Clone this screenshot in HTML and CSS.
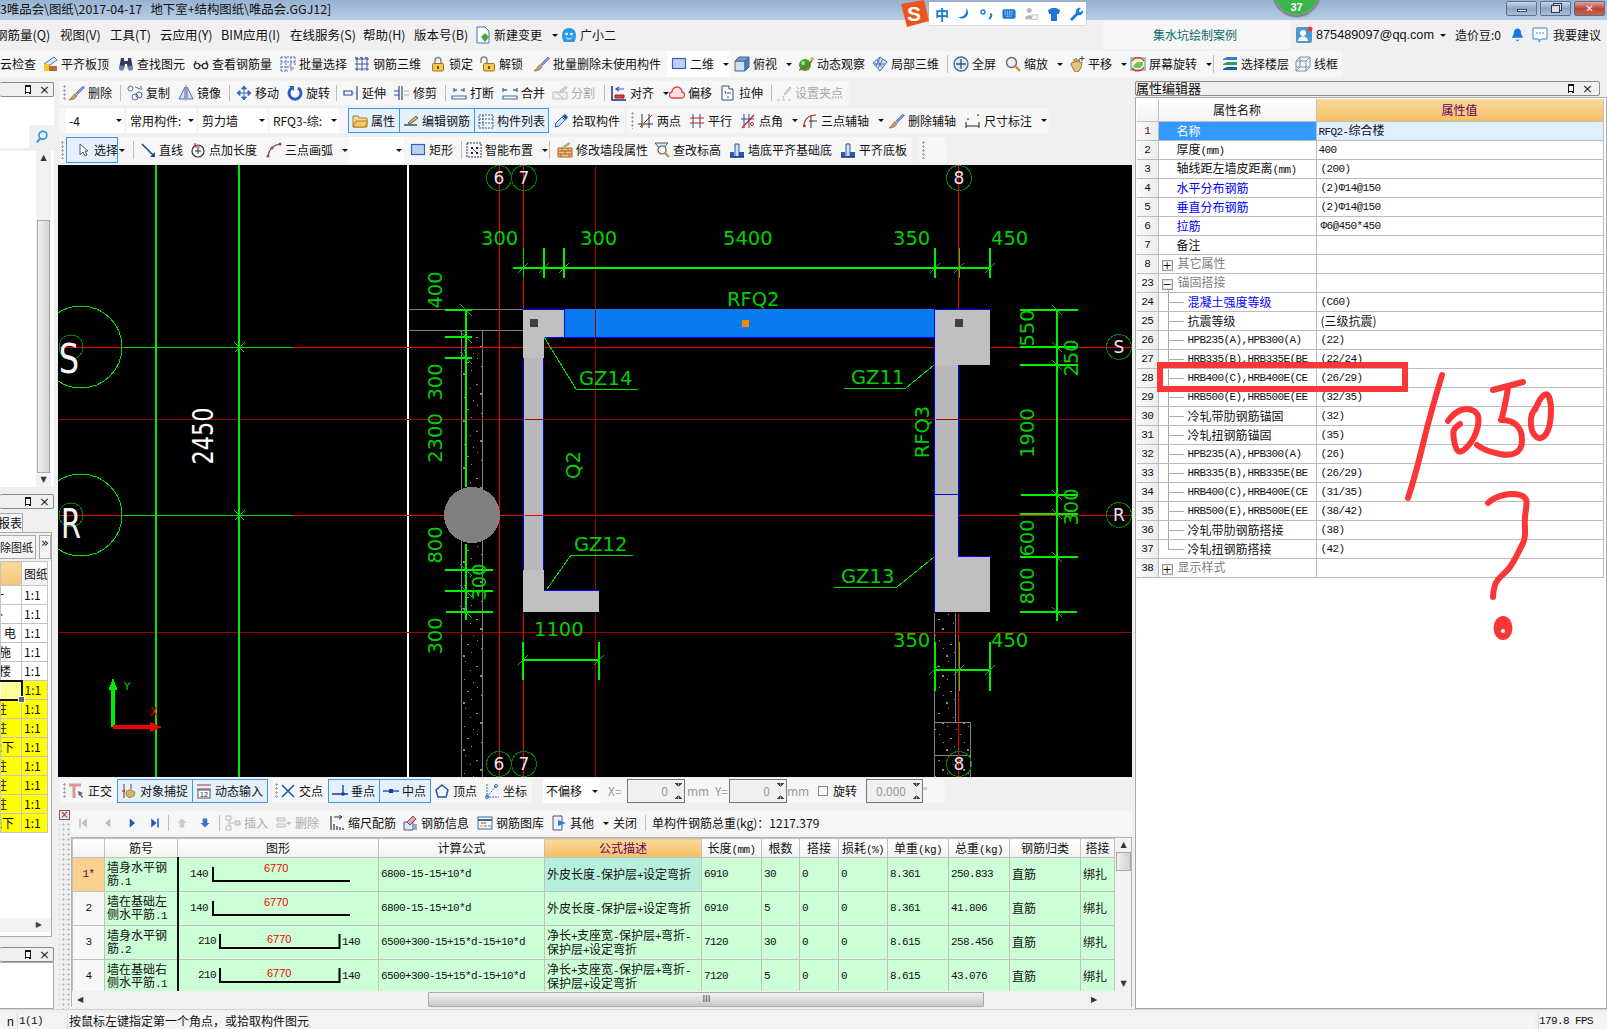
FILE: index.html
```html
<!DOCTYPE html>
<html lang="zh-CN">
<head>
<meta charset="utf-8">
<title>广联达钢筋算量</title>
<link rel="stylesheet" href="styles.css">
</head>
<body>
<svg class="defs" aria-hidden="true">
<defs>
<pattern id="sp" width="21" height="47" patternUnits="userSpaceOnUse">
<path class="spk" d="M3 3h1v1H3zM14 8h2v1h-2zM8 12h1v1H8zM18 17h2v2h-2zM2 21h1v1H2zM11 24h1v1h-1zM15 29h1v1h-1zM5 33h2v1H5zM19 37h1v1h-1zM9 41h1v1H9zM1 44h2v2H1z"/>
</pattern>
<symbol id="i-flush" viewBox="0 0 16 16"><path d="M2 8 12 1l3 3L5 11z" fill="#dfe7f2" stroke="#4878a8"/><rect x="2" y="10" width="13" height="5" fill="#b86a30"/><rect x="2" y="8" width="5" height="7" fill="#f8c830"/></symbol>
<symbol id="i-binoc" viewBox="0 0 16 16"><path d="M3 2h3v3h4V2h3l2 11h-5L9 8H7l-1 5H1z" fill="#2c3e5c"/><circle cx="3.500" cy="12" r="2.600" fill="#6a84a8"/><circle cx="12.500" cy="12" r="2.600" fill="#6a84a8"/></symbol>
<symbol id="i-glass" viewBox="0 0 16 16"><g fill="none" stroke="#333" stroke-width="1.300"><circle cx="4" cy="10" r="2.700"/><circle cx="12" cy="10" r="2.700"/><path d="M6.700 9.500h2.600M1 9l2-4M15 9l-2-4"/></g></symbol>
<symbol id="i-batch" viewBox="0 0 16 16"><path d="M1 1h14M1 6h14M1 11h9M1 15h7M1 1v14M6 1v14M11 1v10M15 1v8" fill="none" stroke="#4a6ea8" stroke-dasharray="2 1"/><path d="m9 8 6 5-3 .5L11 16z" fill="#aab"/></symbol>
<symbol id="i-r3d" viewBox="0 0 16 16"><path d="M1 3h14M1 8h14M1 13h14M3 1v14M8 1v14M13 1v14M1 1l3 2M6 1l3 2M11 1l3 2" fill="none" stroke="#3a5a98"/></symbol>
<symbol id="i-lock" viewBox="0 0 16 16"><path d="M5 8V4.500a3 3 0 0 1 6 0V8" fill="none" stroke="#888" stroke-width="1.500"/><rect x="2.500" y="7.500" width="11" height="7.500" rx="1" fill="#f2c94c" stroke="#a07818"/><rect x="7" y="10" width="2" height="3" fill="#654"/></symbol>
<symbol id="i-unlock" viewBox="0 0 16 16"><path d="M1 7V4a3 3 0 0 1 6 0v4" fill="none" stroke="#888" stroke-width="1.500"/><rect x="3.500" y="7.500" width="11" height="7.500" rx="1" fill="#f2c94c" stroke="#a07818"/><rect x="8" y="10" width="2" height="3" fill="#654"/></symbol>
<symbol id="i-brush" viewBox="0 0 16 16"><path d="m7 8 7-7 1.500 1.500-7 7z" fill="#7a9fd6" stroke="#3c5c98" stroke-width=".6"/><path d="M6 8.500 8 10.500C7 14 3 15 0 15c2-1 3-4 6-6.500z" fill="#c89868" stroke="#805830" stroke-width=".6"/></symbol>
<symbol id="i-rect" viewBox="0 0 16 16"><rect x="1.500" y="2.500" width="13" height="10" fill="#bcd0f2" stroke="#3464b8" stroke-width="1.200"/></symbol>
<symbol id="i-cube" viewBox="0 0 16 16"><path d="M1 5h10v10H1z" fill="#cfe0f2" stroke="#3a6a98"/><path d="M1 5l4-4h10l-4 4z" fill="#7a9ec6" stroke="#3a6a98"/><path d="M11 5l4-4v10l-4 4z" fill="#4f7ca8" stroke="#3a6a98"/></symbol>
<symbol id="i-orbit" viewBox="0 0 16 16"><circle cx="7" cy="9" r="6" fill="#3da030"/><circle cx="5" cy="7" r="2" fill="#a8e080"/><path d="M1 14C6 13 13 8 15 2" fill="none" stroke="#806830" stroke-width="1.500"/><circle cx="14" cy="3" r="1.800" fill="#a8c848"/></symbol>
<symbol id="i-local" viewBox="0 0 16 16"><path d="M1 7 8 1l7 5-7 9z" fill="#cfe0f6" stroke="#4a74b0"/><path d="m5 4 5 7M8 2l-4 8M11 3 6 12M2 8h11" stroke="#4a74b0" fill="none"/></symbol>
<symbol id="i-zfull" viewBox="0 0 16 16"><circle cx="8" cy="8" r="7" fill="#dfe9f6" stroke="#54688a" stroke-width="1.400"/><path d="M8 3v10M3 8h10" stroke="#2850a0" stroke-width="1.300"/></symbol>
<symbol id="i-zoom" viewBox="0 0 16 16"><circle cx="6.500" cy="6.500" r="5" fill="#e8f0fa" stroke="#667" stroke-width="1.400"/><path d="m10 10 5 5" stroke="#c89828" stroke-width="2.400"/></symbol>
<symbol id="i-hand" viewBox="0 0 16 16"><path d="M2 9c0-2 1-3 2-3l1 1V3l2 3V2l2 4 1-3 1 4 2-1-1 6-3 4H6z" fill="#e8c078" stroke="#8a6830" stroke-width=".8"/><path d="M13 0v5M10.500 2.500h5" stroke="#444"/></symbol>
<symbol id="i-rot" viewBox="0 0 16 16"><rect x="1" y="2" width="14" height="12" fill="#f8f0c8" stroke="#58a8c8" stroke-width="1.200"/><path d="M3 10 7 6h6v3l-3 3H5z" fill="#78c058"/><path d="M2 5a7 7 0 0 1 12 0M14 11a7 7 0 0 1-12 1" fill="none" stroke="#e03030" stroke-width="1.300"/></symbol>
<symbol id="i-floors" viewBox="0 0 16 16"><path d="M1 3 5 1h10v3H1z" fill="#3a7ac0"/><path d="M1 8l4-2h10v3H1z" fill="#2aa060"/><path d="M1 13l4-2h10v3H1z" fill="#1a5aa0"/></symbol>
<symbol id="i-wire" viewBox="0 0 16 16"><path d="M1 5h10v10H1zM1 5l4-4h10v10l-4 4M11 5l4-4M5 1v10H1M5 11l-4 4M5 11h10" fill="none" stroke="#7a90a8"/></symbol>
<symbol id="i-copy" viewBox="0 0 16 16"><circle cx="3.500" cy="3.500" r="2.500" fill="none" stroke="#667"/><circle cx="8" cy="12" r="3" fill="none" stroke="#4a6ea8"/><circle cx="12" cy="10" r="3" fill="none" stroke="#4a6ea8"/><path d="m8 2 5 2M14 1v4" stroke="#667" fill="none"/></symbol>
<symbol id="i-mirror" viewBox="0 0 16 16"><path d="M7 2v12H1z" fill="#d8e4f4" stroke="#4a6ea8"/><path d="M9 2v12h6z" fill="#d8e4f4" stroke="#4a6ea8"/><path d="M8 0v16" stroke="#889"/></symbol>
<symbol id="i-move" viewBox="0 0 16 16"><path d="M8 1v14M1 8h14M8 1 5.500 4h5zM8 15l-2.500-3h5zM1 8l3-2.500v5zM15 8l-3-2.500v5z" fill="#3a6ab0" stroke="#3a6ab0"/></symbol>
<symbol id="i-rotc" viewBox="0 0 16 16"><path d="M5 3a6 6 0 1 0 6 0" fill="none" stroke="#2860c8" stroke-width="3"/><path d="M2 1h5v5z" fill="#2860c8"/></symbol>
<symbol id="i-extend" viewBox="0 0 16 16"><path d="M1 6h8v4H1z" fill="none" stroke="#2a4a98" stroke-width="1.200"/><path d="M14 1v14" stroke="#2a4a98" stroke-width="1.200"/><path d="M10 8h3" stroke="#999" stroke-dasharray="1 1"/></symbol>
<symbol id="i-trim" viewBox="0 0 16 16"><path d="M5 1v14M8 1v14" stroke="#2a4a98" stroke-width="1.200"/><path d="M0 6h5M0 10h5" stroke="#2a4a98"/><path d="M10 6h5M10 10h5" stroke="#aaa"/></symbol>
<symbol id="i-break" viewBox="0 0 16 16"><path d="M1 11h14v3H1z" fill="none" stroke="#3a6ea8" stroke-width="1.200"/><path d="M3 5h3M3 3v4M10 5h3M13 3v4" fill="none" stroke="#3a6ea8" stroke-width="1.300"/></symbol>
<symbol id="i-merge" viewBox="0 0 16 16"><path d="M1 11h14v3H1z" fill="none" stroke="#3a6ea8" stroke-width="1.200"/><path d="M1 5h4M1 3v4M11 5h4M15 3v4" fill="none" stroke="#3a6ea8" stroke-width="1.300"/></symbol>
<symbol id="i-split" viewBox="0 0 16 16"><path d="M1 7h14v7H1zM4 7l8 7" fill="#eee" stroke="#bbb"/><path d="m8 6 6-5 1 2-6 5z" fill="#ddd" stroke="#bbb"/></symbol>
<symbol id="i-align" viewBox="0 0 16 16"><path d="M1 1v14h14" fill="none" stroke="#1a2a80" stroke-width="1.500"/><path d="M4 10h9v3H4z" fill="#e04040" stroke="#a01818"/><path d="M13 4H6m2-2-3 2 3 2" fill="none" stroke="#2a58b8" stroke-width="1.200"/></symbol>
<symbol id="i-offset" viewBox="0 0 16 16"><path d="M4 13a3 3 0 0 1-1-6 5 5 0 0 1 10 0 3 3 0 0 1-1 6z" fill="#fde0e0" stroke="#d04848" stroke-width="1.300"/></symbol>
<symbol id="i-stretch" viewBox="0 0 16 16"><path d="M2 1h7v3h4v11H2z" fill="#fff" stroke="#2a4a80"/><path d="M8 7v2M8 11v2M10 7v2M5 6l1 3" stroke="#2a4a80"/></symbol>
<symbol id="i-grip" viewBox="0 0 16 16"><path d="m8 9 6-7 1 1-6 7z" fill="#ddd" stroke="#bbb"/><path d="M1 15h3M6 15h3M12 15h3M7 11l1 3" stroke="#bbb"/></symbol>
<symbol id="i-prop" viewBox="0 0 16 16"><path d="M1 3h5l1 2h8v9H1z" fill="#f6d890" stroke="#a88028"/><path d="m1 14 3-6h12l-3 6z" fill="#f8c860" stroke="#a88028"/></symbol>
<symbol id="i-edit" viewBox="0 0 16 16"><path d="M1 12h13" stroke="#222" stroke-width="1.200"/><path d="m5 10 8-7 2 2-8 6z" fill="#d8b870" stroke="#706030"/></symbol>
<symbol id="i-list" viewBox="0 0 16 16"><path d="M1 2h14v13H1zM1 6h14M1 10h14M5 2v13" fill="#f4f6fa" stroke="#3a5a88" stroke-dasharray="2 1"/></symbol>
<symbol id="i-pick" viewBox="0 0 16 16"><path d="m2 14 1-4 6-6 3 3-6 6z" fill="#cfe0f8" stroke="#2a58a8"/><path d="m9 3 3-2 3 3-2 3z" fill="#2a58a8"/></symbol>
<symbol id="i-2pt" viewBox="0 0 16 16"><path d="M4 1v14M11 1v14M0 11h15" stroke="#334" /><path d="M2 14 14 2" stroke="#c02020"/><circle cx="5" cy="11" r="1.500" fill="#60a030"/></symbol>
<symbol id="i-par" viewBox="0 0 16 16"><path d="M4 1v14M11 1v14" stroke="#2a4a98"/><path d="M1 5h14M1 10h14" stroke="#c02020"/></symbol>
<symbol id="i-ang" viewBox="0 0 16 16"><path d="M4 1v14M9 1v14M1 6h13" stroke="#2a4a98"/><path d="m2 15 12-13" stroke="#d02020" stroke-width="1.200"/><circle cx="12" cy="11" r="1.500" fill="none" stroke="#c02020"/></symbol>
<symbol id="i-arc3" viewBox="0 0 16 16"><path d="M2 13C2 6 7 2 14 2" fill="none" stroke="#c02020" stroke-width="1.200"/><circle cx="2.500" cy="13" r="1.300" fill="#c02020"/><path d="M7 8h8M9 3v12" stroke="#334"/></symbol>
<symbol id="i-dim" viewBox="0 0 16 16"><path d="M1 9v6M14 9v6M1 13h13" stroke="#222"/><rect x="2" y="5" width="2" height="2" fill="#40c060"/><rect x="12" y="1" width="2" height="2" fill="#40c060"/></symbol>
<symbol id="i-cur" viewBox="0 0 16 16"><path d="M5 2v11l3-3 2 4 2-1-2-4h3z" fill="#fff" stroke="#556" stroke-width="1"/></symbol>
<symbol id="i-line" viewBox="0 0 16 16"><path d="m2 2 11 11" stroke="#1a4a88" stroke-width="1.600"/><path d="M15 15h-5l5-5z" fill="#1a4a88"/></symbol>
<symbol id="i-plen" viewBox="0 0 16 16"><circle cx="8" cy="9" r="6" fill="none" stroke="#334" stroke-width="1.200"/><path d="M5 9h6M8 6v6" stroke="#334"/><path d="M5 1v4h5" fill="none" stroke="#d02020"/></symbol>
<symbol id="i-arc" viewBox="0 0 16 16"><path d="M2 14C3 7 7 3 14 2" fill="none" stroke="#44a" stroke-width="1.200"/><circle cx="2" cy="14" r="1.500" fill="#d03030"/><circle cx="6" cy="6" r="1.500" fill="#d03030"/><circle cx="14" cy="2" r="1.500" fill="#d03030"/></symbol>
<symbol id="i-smart" viewBox="0 0 16 16"><path d="M1 1h14v14H1z" fill="none" stroke="#334" stroke-dasharray="2 1"/><path d="M5 5h2v2H5zM10 5h2v2h-2zM5 10h2v2H5zM10 10h2v2h-2z" fill="#223"/><path d="M7 7l3 3" stroke="#2a58b8"/></symbol>
<symbol id="i-brick" viewBox="0 0 16 16"><path d="M1 6h14v9H1z" fill="#f4c080" stroke="#b06030"/><path d="M1 9h14M1 12h14M5 6v3M11 6v3M8 9v3M4 12v3M12 12v3" stroke="#b06030"/><path d="m5 5 7-5 2 2-7 4z" fill="#a8b860"/></symbol>
<symbol id="i-elev" viewBox="0 0 16 16"><path d="M1 1h13L9 7H6z" fill="#dce6f0" stroke="#556"/><circle cx="8" cy="8" r="4" fill="#fff" stroke="#556" stroke-width="1.200"/><path d="m11 11 4 4" stroke="#c09028" stroke-width="2.200"/></symbol>
<symbol id="i-wall" viewBox="0 0 16 16"><path d="M1 10h4v5H1zM10 10h5v5h-5z" fill="#2a5ab0"/><path d="M6 2h4v13H6z" fill="#cfe0f6" stroke="#2a5ab0"/><path d="M1 15h14" stroke="#123a88" stroke-width="1.500"/></symbol>
<symbol id="i-ortho" viewBox="0 0 16 16"><path d="M0 2h12M5 2v13" stroke="#d89898" stroke-width="3"/><path d="m9 8 1 5 1-1 2 3 1-1-2-3 2-1z" fill="#556"/></symbol>
<symbol id="i-snap" viewBox="0 0 16 16"><path d="M3 1v14M10 1v5" stroke="#7a2a2a"/><path d="M1 8h3M8 8h3" stroke="#7a2a2a"/><path d="M5 9c1-2 5-3 7-1l2 1-1 4-5 2-3-3z" fill="#d8b468" stroke="#8a6830" stroke-width=".7"/></symbol>
<symbol id="i-dyn" viewBox="0 0 16 16"><path d="M1 2h14M1 6h14" stroke="#a03838" stroke-width="1.200"/><rect x="2" y="7" width="12" height="8" fill="#fff" stroke="#556"/><text class="dyn12" x="4" y="14">12</text></symbol>
<symbol id="i-x" viewBox="0 0 16 16"><path d="m2 2 12 12M14 2 2 14" stroke="#1a58b0" stroke-width="1.600"/></symbol>
<symbol id="i-perp" viewBox="0 0 16 16"><path d="M0 11h16M11 2v9" stroke="#1a3a98" stroke-width="1.300"/><rect x="9.500" y="9.500" width="3" height="3" fill="#1a3a98"/></symbol>
<symbol id="i-midp" viewBox="0 0 16 16"><path d="M0 8h16" stroke="#1a3a98" stroke-width="1.300"/><rect x="6" y="6" width="4" height="4" fill="#1a3a98"/></symbol>
<symbol id="i-vert" viewBox="0 0 16 16"><path d="m8 2 6 5-2 7H4L2 7z" fill="none" stroke="#1a58b0" stroke-width="1.500"/></symbol>
<symbol id="i-coord" viewBox="0 0 16 16"><path d="M3 1v13h12M3 14 12 3" fill="none" stroke="#2a6ac8" stroke-dasharray="2 1"/><circle cx="12" cy="3" r="1.500" fill="none" stroke="#2a6ac8"/><circle cx="3" cy="14" r="1.500" fill="none" stroke="#2a6ac8"/></symbol>
<symbol id="i-first" viewBox="0 0 16 16"><path d="M3 2h2v12H3zM13 2v12L6 8z" fill="#bbb"/></symbol>
<symbol id="i-prev" viewBox="0 0 16 16"><path d="M11 2v12L4 8z" fill="#bbb"/></symbol>
<symbol id="i-next" viewBox="0 0 16 16"><path d="M5 2v12l7-6z" fill="#1a58c0"/></symbol>
<symbol id="i-last" viewBox="0 0 16 16"><path d="M3 2v12l7-6zM11 2h2v12h-2z" fill="#1a58c0"/></symbol>
<symbol id="i-up" viewBox="0 0 16 16"><path d="M8 2l6 6h-3v6H5V8H2z" fill="#ccc"/></symbol>
<symbol id="i-down" viewBox="0 0 16 16"><path d="M8 14 2 8h3V2h6v6h3z" fill="#3a70d0"/></symbol>
<symbol id="i-ins" viewBox="0 0 16 16"><path d="M1 1h5v4H1zM1 11h5v4H1zM4 5v6M4 8h5" fill="none" stroke="#bbb"/><path d="M10 6h5v4h-5z" fill="#ddd" stroke="#bbb"/></symbol>
<symbol id="i-del" viewBox="0 0 16 16"><path d="M1 3h8v3H1zM1 9h8v3H1z" fill="#eee" stroke="#bbb"/><path d="M10 8h4" stroke="#bbb"/><path d="m12 6 3 2-3 2z" fill="#bbb"/></symbol>
<symbol id="i-scale" viewBox="0 0 16 16"><path d="M2 1v14M5 9v6M8 11v4M11 12v3M14 13v2" stroke="#334" stroke-width="1.200"/><path d="M5 2h7m-2-2 3 2-3 2" fill="none" stroke="#334"/></symbol>
<symbol id="i-info" viewBox="0 0 16 16"><path d="M2 7h9v8H2z" fill="#dce8f8" stroke="#557"/><path d="m5 7 6-6 3 3-6 6z" fill="#d8a8a8" stroke="#846"/><rect x="11" y="9" width="4" height="6" fill="#8ab"/></symbol>
<symbol id="i-lib" viewBox="0 0 16 16"><rect x="1" y="2" width="14" height="12" fill="#f4f8fc" stroke="#3a6a98"/><path d="M1 5h14" stroke="#3a6a98" stroke-width="2"/><path d="M4 8h5" stroke="#556"/><path d="M3 11h3" stroke="#d8a020"/><path d="M7 11h3" stroke="#e04040"/><path d="M11 11h3" stroke="#30a060"/></symbol>
<symbol id="i-oth" viewBox="0 0 16 16"><path d="M2 1h9v14H2z" fill="#e8f0f8" stroke="#557"/><path d="M7 5v6l8-3z" fill="#3a78d8" /></symbol>
</defs>
</svg>

<div class="app">
  <header class="titlebar">
    <span class="ttext">3唯品会\图纸\2017-04-17   地下室+结构图纸\唯品会.GGJ12]</span>
    <div class="badge37"><span>37</span></div>
    <div class="winbtns">
      <span class="wb"><i class="wmin"></i></span>
      <span class="wb"><i class="wres"></i></span>
      <span class="wb wclose">✕</span>
    </div>
  </header>

  <nav class="menubar">
    <div class="menus">
      <span class="mfirst">钢筋量(Q)</span><span>视图(V)</span><span>工具(T)</span><span>云应用(Y)</span><span>BIM应用(I)</span><span>在线服务(S)</span><span>帮助(H)</span><span>版本号(B)</span>
      <span class="mi"><svg class="ic" viewBox="0 0 16 16"><path d="M2 0h8l4 4v12H2z" fill="#fff" stroke="#3478c8"/><path d="M10 6l4 4-4 5-4-5z" fill="#4aa838"/></svg>新建变更<i class="ar"></i></span>
      <span class="mi"><svg class="ic mascot" viewBox="0 0 16 16"><path d="M8 1a7 6.500 0 0 1 7 7c0 3-1 6-2 7H3C2 14 1 11 1 8a7 6.500 0 0 1 7-7z" fill="#2a9ae8"/><circle cx="5.500" cy="7" r="1.300" fill="#fff"/><circle cx="10.500" cy="7" r="1.300" fill="#fff"/><path d="M5 10.500c2 2 4 2 6 0" fill="none" stroke="#fff"/></svg>广小二</span>
    </div>
    <div class="casebox">集水坑绘制案例</div>
    <div class="userbox">
      <svg class="ic user" viewBox="0 0 16 16"><rect width="16" height="16" rx="2" fill="#4a9ad0"/><circle cx="7" cy="6" r="3" fill="#fff"/><path d="M2 14c0-6 10-6 10 0z" fill="#fff"/><circle cx="14" cy="2" r="2.500" fill="#f03838"/></svg>
      <span class="mail">875489097@qq.com</span><i class="ar"></i>
      <span class="beans">造价豆:0</span>
      <svg class="bell" viewBox="0 0 14 16"><path d="M7 1c3 0 4 3 4 6l2 4H1l2-4c0-3 1-6 4-6z" fill="#1a78e0"/><path d="M5 13h4l-2 2z" fill="#1a78e0"/></svg>
      <svg class="chat" viewBox="0 0 16 16"><path d="M1 1h14v11H9l-2 3v-3H1z" fill="#fff" stroke="#2a8ae0"/><path d="M4 6h2M7 6h2M10 6h2" stroke="#2a8ae0"/></svg>
      <span>我要建议</span>
    </div>
  </nav>

  <div class="seg tb1">
    <span class="ti">云检查</span>
    <span class="ti"><svg class="ic"><use href="#i-flush"/></svg>平齐板顶</span>
    <span class="ti"><svg class="ic"><use href="#i-binoc"/></svg>查找图元</span>
    <span class="ti"><svg class="ic"><use href="#i-glass"/></svg>查看钢筋量</span>
    <span class="ti"><svg class="ic"><use href="#i-batch"/></svg>批量选择</span>
    <span class="ti"><svg class="ic"><use href="#i-r3d"/></svg>钢筋三维</span>
    <span class="ti"><svg class="ic"><use href="#i-lock"/></svg>锁定</span>
    <span class="ti"><svg class="ic"><use href="#i-unlock"/></svg>解锁</span>
    <span class="ti"><svg class="ic"><use href="#i-brush"/></svg>批量删除未使用构件</span>
    <span class="ti lit"><svg class="ic"><use href="#i-rect"/></svg>二维<i class="ar"></i></span>
    <span class="ti"><svg class="ic"><use href="#i-cube"/></svg>俯视<i class="ar"></i></span>
    <span class="ti"><svg class="ic"><use href="#i-orbit"/></svg>动态观察</span>
    <span class="ti"><svg class="ic"><use href="#i-local"/></svg>局部三维</span>
    <i class="sep"></i>
    <span class="ti"><svg class="ic"><use href="#i-zfull"/></svg>全屏</span>
    <span class="ti"><svg class="ic"><use href="#i-zoom"/></svg>缩放<i class="ar"></i></span>
    <span class="ti"><svg class="ic"><use href="#i-hand"/></svg>平移<i class="ar"></i></span>
    <span class="ti"><svg class="ic"><use href="#i-rot"/></svg>屏幕旋转<i class="ar"></i></span>
    <i class="sep"></i>
    <span class="ti"><svg class="ic"><use href="#i-floors"/></svg>选择楼层</span>
    <span class="ti"><svg class="ic"><use href="#i-wire"/></svg>线框</span>
  </div>

  <div class="work">
    <aside class="leftcol">
      <div class="ptitle lt1"><i class="pin"></i><b class="px">×</b></div>
      <div class="whitefill"></div>
      <div class="searchrow"><span class="sinput"></span><svg class="sicon" viewBox="0 0 16 16"><circle cx="9" cy="6" r="4.500" fill="none" stroke="#3a9ae0" stroke-width="2"/><path d="M6 10l-4 4" stroke="#3a9ae0" stroke-width="2.500"/></svg></div>
      <div class="listbox">
        <div class="vscroll"><span class="sa">▲</span><span class="thumb"></span><span class="sa">▼</span></div>
      </div>
      <div class="ptitle lt2"><i class="pin"></i><b class="px">×</b></div>
      <div class="tabrow"><span class="ltab">报表</span></div>
      <div class="lbox">
        <div class="lbtns"><span class="lbtn">除图纸</span><span class="lmore">»</span></div>
        <table class="ltable">
          <tr class="lh"><th class="lho"></th><th>图纸</th></tr>
          <tr><td class="p17">一</td><td>1:1</td></tr>
          <tr><td class="p15">丶</td><td>1:1</td></tr>
          <tr><td class="p5">电</td><td>1:1</td></tr>
          <tr><td class="p10">施</td><td>1:1</td></tr>
          <tr><td class="p10">楼</td><td>1:1</td></tr>
          <tr class="y"><td class="cur"></td><td>1:1</td></tr>
          <tr class="y"><td>柱</td><td>1:1</td></tr>
          <tr class="y"><td>柱</td><td>1:1</td></tr>
          <tr class="y"><td class="p7">地下</td><td>1:1</td></tr>
          <tr class="y"><td>柱</td><td>1:1</td></tr>
          <tr class="y"><td>柱</td><td>1:1</td></tr>
          <tr class="y"><td>柱</td><td>1:1</td></tr>
          <tr class="y"><td class="p7">地下</td><td>1:1</td></tr>
        </table>
        <div class="lscroll"><span>▶</span></div>
      </div>
      <div class="ptitle lt3"><i class="pin"></i><b class="px">×</b></div>
      <div class="lastbox"></div>
    </aside>

    <main class="center">
      <div class="row r2">
        <div class="seg s2">
          <i class="grip"></i>
          <span class="ti"><svg class="ic"><use href="#i-brush"/></svg>删除</span><i class="sep"></i>
          <span class="ti"><svg class="ic"><use href="#i-copy"/></svg>复制</span>
          <span class="ti"><svg class="ic"><use href="#i-mirror"/></svg>镜像</span><i class="sep"></i>
          <span class="ti"><svg class="ic"><use href="#i-move"/></svg>移动</span>
          <span class="ti"><svg class="ic"><use href="#i-rotc"/></svg>旋转</span><i class="sep"></i>
          <span class="ti"><svg class="ic"><use href="#i-extend"/></svg>延伸</span>
          <span class="ti"><svg class="ic"><use href="#i-trim"/></svg>修剪</span><i class="sep"></i>
          <span class="ti"><svg class="ic"><use href="#i-break"/></svg>打断</span>
          <span class="ti"><svg class="ic"><use href="#i-merge"/></svg>合并</span>
          <span class="ti off"><svg class="ic"><use href="#i-split"/></svg>分割</span><i class="sep"></i>
          <span class="ti"><svg class="ic"><use href="#i-align"/></svg>对齐<i class="ar"></i></span>
          <span class="ti"><svg class="ic"><use href="#i-offset"/></svg>偏移</span>
          <span class="ti"><svg class="ic"><use href="#i-stretch"/></svg>拉伸</span><i class="sep"></i>
          <span class="ti off"><svg class="ic"><use href="#i-grip"/></svg>设置夹点</span>
        </div>
      </div>
      <div class="row r3">
        <div class="seg s3a">
          <i class="blank"></i>
          <span class="combo">-4<i class="ar"></i></span>
          <span class="combo">常用构件:<i class="ar"></i></span>
          <span class="combo">剪力墙<i class="ar"></i></span>
          <span class="combo cm6">RFQ3-综:<i class="ar"></i></span>
          <i class="blank"></i>
          <span class="ti tog"><svg class="ic"><use href="#i-prop"/></svg>属性</span>
          <span class="ti tog"><svg class="ic"><use href="#i-edit"/></svg>编辑钢筋</span>
          <span class="ti tog"><svg class="ic"><use href="#i-list"/></svg>构件列表</span>
          <span class="ti ind"><svg class="ic"><use href="#i-pick"/></svg>拾取构件</span>
        </div>
        <div class="seg s3b">
          <i class="grip"></i>
          <span class="ti"><svg class="ic"><use href="#i-2pt"/></svg>两点</span>
          <span class="ti"><svg class="ic"><use href="#i-par"/></svg>平行</span>
          <span class="ti"><svg class="ic"><use href="#i-ang"/></svg>点角<i class="ar"></i></span>
          <span class="ti"><svg class="ic"><use href="#i-arc3"/></svg>三点辅轴<i class="ar"></i></span>
          <span class="ti"><svg class="ic"><use href="#i-brush"/></svg>删除辅轴</span>
          <span class="ti"><svg class="ic"><use href="#i-dim"/></svg>尺寸标注<i class="ar"></i></span>
        </div>
      </div>
      <div class="row r4">
        <div class="seg s4a">
          <i class="grip"></i>
          <span class="ti tog sel"><svg class="ic"><use href="#i-cur"/></svg>选择</span>
          <i class="ar artrack"></i><i class="sep"></i>
          <span class="ti"><svg class="ic"><use href="#i-line"/></svg>直线</span>
          <span class="ti"><svg class="ic"><use href="#i-plen"/></svg>点加长度</span>
          <span class="ti"><svg class="ic"><use href="#i-arc"/></svg>三点画弧<i class="ar"></i></span>
          <span class="combo"><i class="ar"></i></span>
          <span class="ti"><svg class="ic"><use href="#i-rect"/></svg>矩形</span><i class="sep"></i>
          <span class="ti"><svg class="ic"><use href="#i-smart"/></svg>智能布置<i class="ar"></i></span><i class="sep"></i>
          <span class="ti"><svg class="ic"><use href="#i-brick"/></svg>修改墙段属性</span>
          <span class="ti"><svg class="ic"><use href="#i-elev"/></svg>查改标高</span>
          <span class="ti"><svg class="ic"><use href="#i-wall"/></svg>墙底平齐基础底</span>
          <span class="ti"><svg class="ic"><use href="#i-wall"/></svg>平齐底板</span>
        </div>
        <div class="seg s4b"><i class="grip"></i></div>
      </div>

      <svg class="canvas" viewBox="58 165 1074 612" role="img">
        <rect class="hatch" x="461" y="330" width="21" height="447"/>
        <rect class="hatch" x="934" y="612" width="21" height="110"/>
        <rect class="hatch" x="934" y="722" width="36" height="55"/>
        <path class="gl" d="M408 309H523M408 330H523M461 330V777M482 330V777M934 612V777M955 612V722M934 722H970V777M934 755H970"/>
        <path class="wl" d="M408 165V777"/>
        <path class="ax" d="M499 165V777M523 165V309M523 612V777M958 165V309M958 612V777M58 347H523M544 347H934M990 347H1132M58 515H1132"/>
        <path class="ad" d="M595 165V777M58 419H1132M58 632H1132"/>
        <path class="gv" d="M156 165V777M239 165V777"/>
        <path class="gt" d="M122 347H292M122 515H292M234 342L244 352M234 352L244 342M234 510L244 520M234 520L244 510"/>
        <circle class="bc" cx="81" cy="347" r="41"/>
        <circle class="bc" cx="81" cy="515" r="41"/>
        <circle class="bb" cx="71" cy="347" r="12"/>
        <circle class="bb" cx="71" cy="515" r="12"/>
        <circle class="bb" cx="499" cy="178" r="12.500"/>
        <circle class="bb" cx="524" cy="178" r="12.500"/>
        <circle class="bb" cx="959" cy="178" r="12.500"/>
        <circle class="bb" cx="499" cy="764" r="12.500"/>
        <circle class="bb" cx="524" cy="764" r="12.500"/>
        <circle class="bb" cx="959" cy="764" r="12.500"/>
        <circle class="bb" cx="1119" cy="347" r="12.500"/>
        <circle class="bb" cx="1119" cy="515" r="12.500"/>
        <text class="wt" x="499" y="184">6</text><text class="wt" x="524" y="184">7</text><text class="wt" x="959" y="184">8</text>
        <text class="wt" x="499" y="770">6</text><text class="wt" x="524" y="770">7</text><text class="wt" x="959" y="770">8</text>
        <text class="wt" x="1119" y="353">S</text><text class="wt" x="1119" y="521">R</text>
        <text class="wbig" transform="translate(69 373) scale(.8 1)">S</text>
        <text class="wbig" transform="translate(71 538) scale(.72 1)">R</text>
        <text class="wmid" transform="translate(213 436) rotate(-90)" textLength="57" lengthAdjust="spacingAndGlyphs">2450</text>
        <path class="bar" d="M564 309H934V338H564z"/>
        <path class="ad" d="M595 309V338"/>
        <rect class="orange" x="742" y="320" width="7" height="7"/>
        <path class="wall" d="M524 358H543V570H524z"/>
        <path class="wall" d="M935 365H958V494H935z"/>
        <path class="col" d="M523 309H564V337H544V358H523z"/>
        <path class="col" d="M523 570H544V591H599V612H523z"/>
        <path class="col" d="M934 309H990V365H934z"/>
        <path class="col" d="M935 494H958.500V557H990V612H935z"/>
        <path class="bl" d="M523.500 358V570M543.500 358V570M544 590.500H599M934.500 309V612M958.500 365V557M935 494H958.500M958.500 556.500H990M523 309.500H564M934 309.500H990M564 309V338M564 337.500H934M544 337.500H564"/>
        <path class="ad" d="M524 419H543M935 419H958"/>
        <path class="ax" d="M524 515H543"/>
        <rect class="pt" x="530" y="319" width="8" height="8"/>
        <rect class="pt" x="955" y="319" width="8" height="8"/>
        <circle class="gc" cx="472" cy="515" r="28"/>
        <path class="dm" d="M513 268H990M466 310V487M466 544V620M445 310H472M445 337H472M445 358H472M445 570H493M445 591H493M446 612H493M1057 310V621M1020 310H1078M1020 347H1078M1020 365H1078M1021 495H1078M1020 514H1078M1020 557H1078M1020 612H1077M934 670H990M523 660H599M544 248V278M564 248V278M935 248V278M990 248V278M935 642V691M990 642V691M523 642V680M599 642V680"/>
        <path class="dt" d="M523 248V278M959 248V278M959 642V691"/>
        <path class="ds" d="M518 273 528 263M539 273 549 263M559 273 569 263M930 273 940 263M954 273 964 263M985 273 995 263M929 675 939 665M954 675 964 665M985 675 995 665M518 665 528 655M594 665 604 655M460 304 472 316M460 331 472 343M460 352 472 364M460 564 472 576M460 585 472 597M460 606 472 618M1052 305 1062 315M1052 342 1062 352M1052 360 1062 370M1052 490 1062 500M1052 509 1062 519M1052 552 1062 562M1052 607 1062 617"/>
        <path class="ld" d="M544 337 576 389H638M547 589 571 555H633M934 365 906 388H844M934 557 897 587H834"/>
        <text class="d" x="481" y="245">300</text><text class="d" x="580" y="245">300</text><text class="d" x="723" y="245">5400</text><text class="d" x="893" y="245">350</text><text class="d" x="991" y="245">450</text>
        <text class="d" x="727" y="306">RFQ2</text>
        <text class="d" x="579" y="385">GZ14</text><text class="d" x="574" y="551">GZ12</text><text class="d" x="851" y="384">GZ11</text><text class="d" x="841" y="583">GZ13</text>
        <text class="d" x="534" y="636">1100</text><text class="d" x="893" y="647">350</text><text class="d" x="991" y="647">450</text>
        <text class="d dv" transform="translate(442 290) rotate(-90)">400</text>
        <text class="d dv" transform="translate(442 382) rotate(-90)">300</text>
        <text class="d dv" transform="translate(442 438) rotate(-90)">2300</text>
        <text class="d dv" transform="translate(442 545) rotate(-90)">800</text>
        <text class="d dv" transform="translate(442 636) rotate(-90)">300</text>
        <text class="d dv" transform="translate(486 582) rotate(-90)">300</text>
        <text class="d dv" transform="translate(580 465) rotate(-90)">Q2</text>
        <text class="d dv" transform="translate(929 432) rotate(-90)">RFQ3</text>
        <text class="d dv" transform="translate(1034 328) rotate(-90)">550</text>
        <text class="d dv" transform="translate(1078 358) rotate(-90)">250</text>
        <text class="d dv" transform="translate(1034 433) rotate(-90)">1900</text>
        <text class="d dv" transform="translate(1078 507) rotate(-90)">300</text>
        <text class="d dv" transform="translate(1034 538) rotate(-90)">600</text>
        <text class="d dv" transform="translate(1034 586) rotate(-90)">800</text>
        <path class="ygreen" d="M113 727V688"/><path class="yh" d="M113 678 108.500 690H117.500z"/>
        <path class="xred" d="M113 727H150"/><path class="xh" d="M162 727 150 722V732z"/>
        <text class="ly" x="127" y="690">Y</text><text class="lx" x="154" y="716">X</text>
      </svg>

      <div class="row snap">
        <div class="seg sn1">
          <i class="grip"></i>
          <span class="ti"><svg class="ic"><use href="#i-ortho"/></svg>正交</span>
          <span class="ti tog"><svg class="ic"><use href="#i-snap"/></svg>对象捕捉</span>
          <span class="ti tog"><svg class="ic"><use href="#i-dyn"/></svg>动态输入</span>
        </div>
        <div class="seg sn2">
          <i class="grip"></i>
          <span class="ti"><svg class="ic"><use href="#i-x"/></svg>交点</span>
          <span class="ti tog"><svg class="ic"><use href="#i-perp"/></svg>垂点</span>
          <span class="ti tog"><svg class="ic"><use href="#i-midp"/></svg>中点</span>
          <i class="blank"></i>
          <span class="ti"><svg class="ic"><use href="#i-vert"/></svg>顶点</span>
          <span class="ti"><svg class="ic"><use href="#i-coord"/></svg>坐标</span>
        </div>
        <div class="seg sn3">
          <span class="combo">不偏移<i class="ar"></i></span>
          <span class="lab labx">X=</span>
          <span class="spin">0<i class="sb"></i></span>
          <span class="lab laby">mm Y=</span>
          <span class="spin">0<i class="sb"></i></span>
          <span class="lab">mm</span>
          <span class="chk"><i></i></span>
          <span class="lab dark">旋转</span>
          <span class="spin">0.000<i class="sb"></i></span>
          <span class="lab">°</span>
        </div>
      </div>

      <section class="bottom">
        <div class="gripcol"><span class="closex">×</span></div>
        <div class="bmain">
          <div class="seg bbar">
            <i class="blank"></i>
            <span class="ti"><svg class="ic nav"><use href="#i-first"/></svg></span>
            <span class="ti"><svg class="ic nav"><use href="#i-prev"/></svg></span>
            <span class="ti"><svg class="ic nav"><use href="#i-next"/></svg></span>
            <span class="ti"><svg class="ic nav"><use href="#i-last"/></svg></span>
            <i class="sep"></i>
            <span class="ti"><svg class="ic nav"><use href="#i-up"/></svg></span>
            <span class="ti"><svg class="ic nav"><use href="#i-down"/></svg></span>
            <i class="sep"></i>
            <span class="ti off"><svg class="ic"><use href="#i-ins"/></svg>插入</span>
            <span class="ti off"><svg class="ic"><use href="#i-del"/></svg>删除</span>
            <span class="ti"><svg class="ic"><use href="#i-scale"/></svg>缩尺配筋</span>
            <span class="ti"><svg class="ic"><use href="#i-info"/></svg>钢筋信息</span>
            <span class="ti"><svg class="ic"><use href="#i-lib"/></svg>钢筋图库</span>
            <span class="ti"><svg class="ic"><use href="#i-oth"/></svg>其他<i class="ar"></i></span>
            <span class="ti">关闭</span>
            <i class="sep"></i>
            <span class="ti">单构件钢筋总重(kg)：1217.379</span>
          </div>
          <div class="gridwrap">
            <div class="gridinner">
              <table class="rebar">
                <colgroup><col class="c1"><col class="c2"><col class="c3"><col class="c4"><col class="c5"><col class="c6"><col class="c7"><col class="c8"><col class="c9"><col class="c10"><col class="c11"><col class="c12"><col class="c13"></colgroup>
                <tr class="hd"><th></th><th>筋号</th><th>图形</th><th>计算公式</th><th class="hot">公式描述</th><th>长度<span class="m">(mm)</span></th><th>根数</th><th>搭接</th><th>损耗<span class="m">(%)</span></th><th>单重<span class="m">(kg)</span></th><th>总重<span class="m">(kg)</span></th><th>钢筋归类</th><th>搭接</th></tr>
                <tr><td class="rh act m">1*</td><td class="nm">墙身水平钢<br>筋<span class="m">.1</span></td><td class="fig"><svg class="shape" viewBox="0 0 201 33"><text class="sn" x="11" y="19">140</text><text class="sr" x="85" y="14">6770</text><path class="sl" d="M34 9V23H171"/></svg></td><td class="m">6800-15-15+10*d</td><td class="pick">外皮长度<span class="m">-</span>保护层<span class="m">+</span>设定弯折</td><td class="m">6910</td><td class="m">30</td><td class="m">0</td><td class="m">0</td><td class="m">8.361</td><td class="m">250.833</td><td>直筋</td><td>绑扎</td></tr>
                <tr><td class="rh m">2</td><td class="nm">墙在基础左<br>侧水平筋<span class="m">.1</span></td><td class="fig"><svg class="shape" viewBox="0 0 201 33"><text class="sn" x="11" y="19">140</text><text class="sr" x="85" y="14">6770</text><path class="sl" d="M34 9V23H171"/></svg></td><td class="m">6800-15-15+10*d</td><td>外皮长度<span class="m">-</span>保护层<span class="m">+</span>设定弯折</td><td class="m">6910</td><td class="m">5</td><td class="m">0</td><td class="m">0</td><td class="m">8.361</td><td class="m">41.806</td><td>直筋</td><td>绑扎</td></tr>
                <tr><td class="rh m">3</td><td class="nm">墙身水平钢<br>筋<span class="m">.2</span></td><td class="fig"><svg class="shape" viewBox="0 0 201 33"><text class="sn" x="19" y="18">210</text><text class="sr" x="88" y="17">6770</text><text class="sn" x="163" y="19">140</text><path class="sl" d="M41 8V22H160.500V8"/></svg></td><td class="m">6500+300-15+15*d-15+10*d</td><td class="nm">净长<span class="m">+</span>支座宽<span class="m">-</span>保护层<span class="m">+</span>弯折<span class="m">-</span><br>保护层<span class="m">+</span>设定弯折</td><td class="m">7120</td><td class="m">30</td><td class="m">0</td><td class="m">0</td><td class="m">8.615</td><td class="m">258.456</td><td>直筋</td><td>绑扎</td></tr>
                <tr><td class="rh m">4</td><td class="nm">墙在基础右<br>侧水平筋<span class="m">.1</span></td><td class="fig"><svg class="shape" viewBox="0 0 201 33"><text class="sn" x="19" y="18">210</text><text class="sr" x="88" y="17">6770</text><text class="sn" x="163" y="19">140</text><path class="sl" d="M41 8V22H160.500V8"/></svg></td><td class="m">6500+300-15+15*d-15+10*d</td><td class="nm">净长<span class="m">+</span>支座宽<span class="m">-</span>保护层<span class="m">+</span>弯折<span class="m">-</span><br>保护层<span class="m">+</span>设定弯折</td><td class="m">7120</td><td class="m">5</td><td class="m">0</td><td class="m">0</td><td class="m">8.615</td><td class="m">43.076</td><td>直筋</td><td>绑扎</td></tr>
              </table>
              <div class="gvs"><span class="sa">▲</span><span class="gthumb"></span><span class="sa lastsa">▼</span></div>
            </div>
            <div class="ghs"><span class="sa">◀</span><span class="hthumb">Ⅲ</span><span class="sa">▶</span></div>
          </div>
        </div>
      </section>
    </main>

    <aside class="rightcol">
      <div class="ptitle rt"><span>属性编辑器</span><i class="pin"></i><b class="px">×</b></div>
      <div class="propwrap">
        <table class="props">
          <colgroup><col class="p1"><col class="p2"><col class="p3"></colgroup>
          <tr class="phd"><th></th><th>属性名称</th><th class="hot">属性值</th></tr>
          <tr><td class="rh act m">1</td><td class="n selname">名称</td><td class="v selval"><span class="m">RFQ2-</span>综合楼</td></tr>
          <tr><td class="rh m">2</td><td class="n">厚度<span class="m">(mm)</span></td><td class="v m">400</td></tr>
          <tr><td class="rh m">3</td><td class="n">轴线距左墙皮距离<span class="m">(mm)</span></td><td class="v v2 m">(200)</td></tr>
          <tr><td class="rh m">4</td><td class="n lnk">水平分布钢筋</td><td class="v v2 m">(2)Φ14@150</td></tr>
          <tr><td class="rh m">5</td><td class="n lnk">垂直分布钢筋</td><td class="v v2 m">(2)Φ14@150</td></tr>
          <tr><td class="rh m">6</td><td class="n lnk">拉筋</td><td class="v v2 m">Φ6@450*450</td></tr>
          <tr><td class="rh m">7</td><td class="n">备注</td><td class="v"></td></tr>
          <tr><td class="rh m">8</td><td class="n gp"><i class="exp">+</i>其它属性</td><td class="v"></td></tr>
          <tr><td class="rh m">23</td><td class="n gp tstart"><i class="exp">−</i>锚固搭接</td><td class="v"></td></tr>
          <tr><td class="rh m">24</td><td class="n sub lnk">混凝土强度等级</td><td class="v v2 m">(C60)</td></tr>
          <tr><td class="rh m">25</td><td class="n sub">抗震等级</td><td class="v v2">(三级抗震)</td></tr>
          <tr><td class="rh m">26</td><td class="n sub m">HPB235(A),HPB300(A)</td><td class="v v2 m">(22)</td></tr>
          <tr><td class="rh m">27</td><td class="n sub m">HRB335(B),HRB335E(BE</td><td class="v v2 m">(22/24)</td></tr>
          <tr><td class="rh m">28</td><td class="n sub m">HRB400(C),HRB400E(CE</td><td class="v v2 m">(26/29)</td></tr>
          <tr><td class="rh m">29</td><td class="n sub m">HRB500(E),HRB500E(EE</td><td class="v v2 m">(32/35)</td></tr>
          <tr><td class="rh m">30</td><td class="n sub">冷轧带肋钢筋锚固</td><td class="v v2 m">(32)</td></tr>
          <tr><td class="rh m">31</td><td class="n sub">冷轧扭钢筋锚固</td><td class="v v2 m">(35)</td></tr>
          <tr><td class="rh m">32</td><td class="n sub m">HPB235(A),HPB300(A)</td><td class="v v2 m">(26)</td></tr>
          <tr><td class="rh m">33</td><td class="n sub m">HRB335(B),HRB335E(BE</td><td class="v v2 m">(26/29)</td></tr>
          <tr><td class="rh m">34</td><td class="n sub m">HRB400(C),HRB400E(CE</td><td class="v v2 m">(31/35)</td></tr>
          <tr><td class="rh m">35</td><td class="n sub m">HRB500(E),HRB500E(EE</td><td class="v v2 m">(38/42)</td></tr>
          <tr><td class="rh m">36</td><td class="n sub">冷轧带肋钢筋搭接</td><td class="v v2 m">(38)</td></tr>
          <tr><td class="rh m">37</td><td class="n sub last">冷轧扭钢筋搭接</td><td class="v v2 m">(42)</td></tr>
          <tr><td class="rh m">38</td><td class="n gp"><i class="exp">+</i>显示样式</td><td class="v"></td></tr>
        </table>
      </div>
    </aside>
  </div>

  <footer class="status">
    <span class="st st0">n</span>
    <span class="st st1 m">1(1)</span>
    <span class="st st2">按鼠标左键指定第一个角点，或拾取构件图元</span>
    <span class="st st3 m">179.8 FPS</span>
  </footer>
</div>

<div class="ime">
  <svg class="imelogo" viewBox="0 0 28 27"><path d="M0 4 23 0l5 21-22 6z" fill="#f0541e"/><text class="imes" x="6" y="21">S</text></svg>
  <div class="imebar">
    <span class="imezh">中</span>
    <svg viewBox="0 0 14 14"><path d="M9 1a6 6 0 1 1-8 9 7 7 0 0 0 8-9z" fill="#1a78d8"/></svg>
    <svg viewBox="0 0 14 14"><circle cx="3" cy="5" r="2" fill="none" stroke="#1a78d8" stroke-width="1.400"/><path d="M10 7c2 0 2 3-1 5" fill="none" stroke="#1a78d8" stroke-width="2"/></svg>
    <svg viewBox="0 0 16 14"><rect x=".5" y="1.500" width="15" height="11" rx="2" fill="#1a78d8"/><path d="M3 4.500h10M3 7h10M5 9.500h6" stroke="#fff" stroke-dasharray="1.500 1"/></svg>
    <svg viewBox="0 0 16 14"><circle cx="6" cy="3" r="2.800" fill="#aab8c4"/><path d="M1 13c0-6 10-6 10 0z" fill="#aab8c4"/><rect x="9" y="8" width="6" height="5" fill="#fff" stroke="#aab8c4"/></svg>
    <svg viewBox="0 0 14 14"><path d="M1 3 5 1h4l4 2-1 4h-2v7H4V7H2z" fill="#1a78d8"/></svg>
    <svg viewBox="0 0 14 14"><path d="M1 12 7 6a4 4 0 0 1 5-5L10 3v2h2l2-2a4 4 0 0 1-5 5l-6 6z" fill="#1a78d8"/></svg>
  </div>
</div>

<svg class="scribble" viewBox="0 0 1607 1029" aria-hidden="true">
  <rect class="redbox" x="1160" y="365" width="245" height="24"/>
  <path class="ink" d="M1442 375C1436 395 1430 415 1424 440S1414 480 1408 498"/>
  <path class="ink" d="M1448 421C1455 411 1465 406 1474 411S1477 436 1468 446 1456 452 1454 440 1455 428 1460 424"/>
  <path class="ink" d="M1493 390 1523 382M1508 388C1506 400 1504 412 1501 420 1512 420 1522 425 1522 440S1510 456 1500 454 1482 449 1477 445"/>
  <path class="ink" d="M1535 410C1540 397 1546 390 1549 397S1552 425 1546 434 1532 436 1531 425 1533 412 1538 404"/>
  <path class="ink" d="M1488 503C1495 496 1510 492 1520 495S1526 505 1525 517 1527 535 1523 543 1515 560 1510 567 1497 578 1495 585 1493 592 1493 597"/>
  <ellipse class="dot" cx="1503" cy="628" rx="9.500" ry="12"/>
  <circle class="hole" cx="1503" cy="631" r="2"/>
</svg>
</body>
</html>
```

FILE: styles.css
```css
* { box-sizing: border-box; }
html, body { margin: 0; padding: 0; }
body {
  width: 1607px; height: 1029px; overflow: hidden; position: relative;
  background: #f0f0f0; color: #111;
  font: 12px/16px "Noto Sans CJK SC", "Liberation Sans", sans-serif;
}
i { font-style: normal; }
.defs { position: absolute; width: 0; height: 0; }
.app { display: flex; flex-direction: column; height: 1029px; }

/* title bar */
.titlebar { height: 20px; flex: none; display: flex; position: relative; background: linear-gradient(#98b2d0, #b7cde6); }
.ttext { white-space: pre; font-size: 12.400px; line-height: 18px; color: #111; }
.badge37 { position: absolute; left: 1273px; top: -31px; width: 47px; height: 47px; border-radius: 50%; background: #3bb54a; border: 2px solid #7d9a88; box-shadow: 0 1px 2px #667; display: flex; align-items: flex-end; justify-content: center; }
.badge37 span { color: #fff; font: bold 11px/14px "Liberation Sans", sans-serif; }
.winbtns { margin-left: auto; display: flex; gap: 3px; padding: 1px 2px 0 0; }
.wb { width: 31px; height: 15px; border: 1px solid #5e7087; border-radius: 2px; background: linear-gradient(#c8d8ea, #8aa4c2 50%, #a8c0da); display: flex; align-items: center; justify-content: center; }
.wclose { background: linear-gradient(#e4a49c, #b84a3c 50%, #c8604c); color: #fff; font: bold 10px/13px "DejaVu Sans", sans-serif; }
.wmin { width: 10px; height: 3px; border: 1px solid #445; background: #fff; margin-top: 4px; }
.wres { width: 9px; height: 8px; border: 1px solid #334; background: #dde; box-shadow: 2px -2px 0 -1px #dde, 2px -2px 0 0 #334; }

/* menu */
.menubar { height: 30px; flex: none; display: flex; align-items: center; position: relative; font-size: 12.500px; }
.menus { display: grid; grid-template-columns: 60px 50px 50px 61px 69px 73px 51px 61px 86px 100px; width: 1103px; }
.menus span { white-space: nowrap; }
.menus .mfirst { margin-left: -5px; }
.menus .mi { display: flex; align-items: center; gap: 3px; font-size: 12px; }
.mi .ar { margin-left: 7px; }
.mascot { width: 16px; height: 16px; }
.casebox { width: 187px; height: 28px; background: #f6f6f6; color: #0b6b6b; text-align: center; line-height: 28px; font-size: 12px; flex: none; border-radius: 3px; padding-right: 3px; }
.userbox { display: flex; align-items: center; font-size: 12px; padding-left: 6px; white-space: nowrap; }
.user { width: 16px; height: 16px; margin-right: 4px; }
.mail { font: 12.700px/16px "Liberation Sans", sans-serif; }
.userbox .ar { margin: 0 9px 0 6px; }
.beans { margin-right: 10px; }
.bell { width: 13px; height: 16px; margin-right: 8px; }
.chat { width: 16px; height: 16px; margin-right: 5px; }

/* tool groups */
.ic { width: 16px; height: 16px; flex: none; display: block; overflow: visible; }
.ar { display: inline-block; width: 0; height: 0; border: 3px solid transparent; border-top: 3px solid #111; border-bottom: 0; flex: none; margin-left: 6px; }
.seg { display: grid; align-items: stretch; background: #f6f6f6; border-radius: 2px; white-space: nowrap; }
.ti { display: flex; align-items: center; gap: 3px; min-width: 0; overflow: hidden; }
.sep { width: 1px; background: #bdbdbd; margin: 4px 0; justify-self: start; }
.grip { width: 3px; justify-self: center; margin: 4px 0; background: radial-gradient(circle at 1.500px 1.500px, #aaa 1.300px, transparent 1.400px) 0 0 / 3px 4px; }
.blank { display: block; }
.off { color: #aaa; }
.lit { background: #fff; }
.tog { background: #e4f0fb; border: 1px solid #3d97e8; padding-left: 3px; margin-right: -1px; }
.sel { padding-left: 8px; }
.ind { padding-left: 5px; }
.artrack { align-self: center; margin-left: 2px; }
.combo { display: flex; align-items: center; justify-content: space-between; background: #fff; margin-right: 3px; padding: 0 2px 0 3px; overflow: hidden; }
.cm6 { margin-right: 6px; }

.tb1 { height: 26px; margin: 1px 0 3px; width: 1343px; flex: none;
  grid-template-columns: 42px 76px 75px 87px 74px 76px 50px 54px 133px 67px 64px 74px 75px 6px 52px 64px 61px 83px 9px 73px 48px; }
.tb1 .ti.lit { padding-left: 4px; margin-right: 5px; }

.work { height: 929px; flex: none; display: grid; grid-template-columns: 58px 1077px 472px; }
.center { display: flex; flex-direction: column; min-width: 0; }
.row { display: flex; flex: none; }
.r2 { height: 26px; padding: 1px 0 1px 1px; }
.s2 { width: 790px; grid-template-columns: 10px 51px 7px 51px 51px 7px 51px 49px 7px 51px 51px 6px 51px 50px 52px 7px 58px 51px 51px 5px 73px; }
.r3 { height: 28px; padding: 2px 0 1px 1px; gap: 2px; }
.s3a { width: 566px; grid-template-columns: 7px 61px 72px 71px 75px 3px 51px 75px 74px 77px; }
.s3b { width: 422px; grid-template-columns: 11px 51px 51px 62px 87px 76px 84px; }
.r4 { height: 31px; padding: 3px 0 2px 1px; gap: 7px; }
.s4a { width: 853px; grid-template-columns: 7px 51px 16px 7px 50px 76px 83px 61px 51px 5px 83px 8px 97px 75px 111px 72px; }
.s4b { width: 27px; grid-template-columns: 8px 1fr; }
.r4 .combo { margin-right: 6px; justify-content: flex-end; }

/* canvas */
.canvas { display: block; flex: none; width: 1074px; height: 612px; background: #000; shape-rendering: crispEdges; }
.canvas text { font-family: "DejaVu Sans", sans-serif; }
.hatch { fill: url(#sp); }
.spk { fill: #8a8a8a; }
.gl, .ax, .ad, .gt { transform: translate(.5px, .5px); }
.gl { stroke: #808080; fill: none; }
.wl { stroke: #fff; stroke-width: 2; fill: none; }
.ax { stroke: #f00000; fill: none; }
.ad { stroke: #a00000; fill: none; }
.gv { stroke: #00e800; stroke-width: 2; fill: none; }
.gt { stroke: #00d800; fill: none; }
.bc { fill: none; stroke: #00e000; }
.bb { fill: none; stroke: #008000; }
.wt { fill: #e8e8e8; font-size: 17px; text-anchor: middle; }
.wbig { fill: #f4f4f4; font-size: 40px; text-anchor: middle; }
.wmid { fill: #fff; font-size: 28px; text-anchor: middle; }
.bar { fill: #0a7af0; }
.orange { fill: #ff8a00; }
.wall { fill: #b8b8b8; }
.col { fill: #c0c0c0; }
.bl { stroke: #0000ff; fill: none; }
.pt { fill: #404040; }
.gc { fill: #808080; }
.dm { stroke: #00f000; stroke-width: 2; fill: none; }
.dt { stroke: #00e000; fill: none; }
.ds { stroke: #00c000; fill: none; }
.ld { stroke: #00e000; fill: none; }
.d { fill: #00d000; font-size: 19.500px; }
.dv { text-anchor: middle; }
.ygreen { stroke: #00f000; stroke-width: 4; }
.xred { stroke: #f00000; stroke-width: 4; }
.yh { fill: #00f000; }
.xh { fill: #f00000; }
.ly { fill: #00d000; font-size: 11px; text-anchor: middle; }
.lx { fill: #e00000; font-size: 12px; text-anchor: middle; }

/* snap row */
.snap { height: 33px; padding: 2px 0 7px 1px; gap: 2px; }
.sn1 { width: 211px; grid-template-columns: 10px 48px 75px 75px 3px; }
.sn2 { width: 260px; grid-template-columns: 8px 48px 51px 51px 4px 50px 48px; }
.sn3 { width: 402px; margin-left: 9px; grid-template-columns: 62px 22px 58px 44px 58px 27px 19px 33px 57px 20px; color: #999; }
.sn3 .combo { color: #111; margin-right: 5px; }
.lab { display: flex; align-items: center; font-size: 12px; }
.labx { padding-left: 3px; }
.laby { padding-left: 2px; word-spacing: 3px; }
.dark { color: #111; }
.spin { display: flex; align-items: center; justify-content: flex-end; border: 1px solid #777; background: #f0f0f0; color: #999; padding-right: 16px; position: relative; }
.sb { position: absolute; right: 2px; top: 3px; width: 7px; height: 16px; background:
  linear-gradient(45deg, transparent 50%, #444 50%) 0 0 / 3.500px 4px no-repeat,
  linear-gradient(-45deg, transparent 50%, #444 50%) 3.500px 0 / 3.500px 4px no-repeat,
  linear-gradient(135deg, transparent 50%, #444 50%) 0 12px / 3.500px 4px no-repeat,
  linear-gradient(-135deg, transparent 50%, #444 50%) 3.500px 12px / 3.500px 4px no-repeat; }
.chk { display: flex; align-items: center; padding-left: 4px; }
.chk i { width: 10px; height: 10px; border: 1px solid #888; background: #f8f8f8; }

/* bottom grid */
.bottom { flex: 1; min-height: 0; display: flex; padding-left: 1px; }
.gripcol { width: 12px; flex: none; background: radial-gradient(circle, #c4c4c4 1px, transparent 1.200px) 2px 12px / 5px 5px; position: relative; }
.closex { display: block; width: 11px; height: 10px; border: 1px solid #666; font: 10px/8px "DejaVu Sans", sans-serif; text-align: center; background: #f0e4e4; color: #a22; }
.bmain { flex: 1; min-width: 0; display: flex; flex-direction: column; margin-right: 3px; }
.bbar { height: 24px; flex: none; margin-top: 1px; margin-bottom: 2px;
  grid-template-columns: 6px 25px 24px 23px 19px 8px 23px 20px 6px 51px 53px 73px 75px 74px 62px 32px 7px 1fr; }
.nav { width: 12px; height: 14px; }
.gridwrap { height: 170px; flex: none; border: 1px solid #b4b4b4; border-width: 1px 1px 0 1px; padding: 0; background: #f0f0f0; display: flex; flex-direction: column; }
.gridinner { display: flex; height: 153px; overflow: hidden; flex: none; }
.rebar { table-layout: fixed; border-collapse: collapse; width: 1042px; flex: none; align-self: flex-start; }
.c1 { width: 32px; } .c2 { width: 73px; } .c3 { width: 201px; } .c4 { width: 166px; } .c5 { width: 157px; } .c6 { width: 60px; } .c7 { width: 38px; } .c8 { width: 39px; } .c9 { width: 49px; } .c10 { width: 61px; } .c11 { width: 61px; } .c12 { width: 71px; } .c13 { width: 34px; }
.rebar th { height: 19px; background: linear-gradient(#fff, #f2f2f2); border: 1px solid #c0c0c0; font-weight: 400; padding: 0 0 1px; line-height: 13px; overflow: hidden; white-space: nowrap; }
.rebar td { height: 34px; background: #ccffd6; border: 1px solid #c0c0c0; padding: 0 2px 2px; line-height: 13px; overflow: hidden; white-space: nowrap; }
.rebar .m { line-height: 10px; }
.rebar td.rh { background: #f7f7f7; text-align: center; }
.rebar td.act, .props td.act { background: #fbd28d; color: #5a005a; }
.rebar td.pick { background: #b6f0dc; }
.rebar td.fig { padding: 0; border-left: 2px solid #111; }
.rebar th.hot, .props th.hot { background: linear-gradient(#fbd99b, #f3c064); color: #660066; }
.shape { display: block; width: 201px; height: 33px; }
.sn { font: 11px "Liberation Mono", monospace; letter-spacing: -.6px; fill: #111; }
.sr { font: 11px "Liberation Sans", sans-serif; fill: #f00000; }
.sl { fill: none; stroke: #000; stroke-width: 2; }
.m { font-family: "Liberation Mono", monospace; font-size: 11px; letter-spacing: -.6px; }
.gvs { width: 17px; flex: none; display: flex; flex-direction: column; align-items: center; background: #f2f2f2; }
.sa { font: 8px/14px "DejaVu Sans", sans-serif; color: #333; display: block; text-align: center; }
.gthumb { width: 15px; height: 19px; background: linear-gradient(90deg, #f0f0f0, #d0d0d0); border: 1px solid #aaa; }
.lastsa { margin-top: auto; }
.ghs { height: 15px; flex: none; display: flex; align-items: center; background: #f2f2f2; margin-top: 1px; }
.ghs .sa { width: 16px; }
.hthumb { margin-left: 340px; width: 556px; height: 15px; background: linear-gradient(#f2f2f2, #c8c8c8); border: 1px solid #aaa; border-radius: 1px; text-align: center; font: 9px/13px "Liberation Sans", sans-serif; color: #444; margin-right: 102px; }

/* left column */
.leftcol { display: flex; flex-direction: column; width: 54px; min-width: 0; }
.ptitle { flex: none; height: 15px; display: flex; align-items: center; justify-content: flex-end; border: 1px solid #8a8a8a; border-left: 0; border-radius: 2px; background: #f0f0f0; gap: 8px; padding-right: 3px; }
.pin { width: 6px; height: 9px; background: linear-gradient(#111, #111) 2.500px 6px / 1px 3px no-repeat, linear-gradient(#111, #111) 0 5px / 6px 1px no-repeat, #fff; border: 1px solid #111; border-width: 0 1px; border-top: 2px solid #111; }
.px { font: 400 13px/13px "DejaVu Sans", sans-serif; color: #222; }
.lt1 { margin-top: 2px; }
.whitefill { height: 28px; background: #fff; flex: none; }
.searchrow { height: 23px; flex: none; display: flex; align-items: center; background: #f0f0f0; }
.sinput { width: 29px; height: 23px; background: #fff; }
.sicon { width: 14px; height: 14px; margin-left: 6px; }
.listbox { height: 336px; margin-top: 3px; flex: none; background: #fff; display: flex; justify-content: flex-end; padding-right: 3px; }
.vscroll { width: 15px; display: flex; flex-direction: column; align-items: center; background: #f2f2f2; }
.thumb { flex: 1; width: 13px; margin: 55px 0 0; background: linear-gradient(90deg, #f0f0f0, #d4d4d4); border: 1px solid #aaa; }
.lt2 { margin-top: 7px; }
.tabrow { height: 23px; flex: none; display: flex; align-items: flex-end; }
.ltab { width: 23px; height: 19px; overflow: hidden; direction: rtl; border: 1px solid #aaa; border-left: 0; border-bottom: 0; line-height: 18px; background: #f4f4f4; white-space: nowrap; }
.lbox { width: 52px; height: 405px; flex: none; border: 1px solid #aaa; border-left: 0; display: flex; flex-direction: column; background: #fff; }
.lbtns { display: flex; background: #f0f0f0; padding: 2px 0; height: 28px; gap: 3px; flex: none; }
.lbtn { width: 36px; border: 1px solid #aaa; border-left: 0; font-size: 11px; line-height: 22px; background: #f4f4f4; white-space: nowrap; overflow: hidden; }
.lmore { width: 12px; border: 1px solid #aaa; text-align: center; font: 13px/14px "DejaVu Sans", sans-serif; background: #f4f4f4; }
.ltable { table-layout: fixed; border-collapse: collapse; width: 48px; flex: none; }
.ltable th, .ltable td { border: 1px solid #c4c4c4; padding: 0; height: 19px; overflow: hidden; line-height: 16px; font-weight: 400; white-space: nowrap; }
.ltable td:first-child { direction: rtl; padding-right: 14px; }
.ltable td.p5 { padding-right: 5px; }
.ltable td.p7 { padding-right: 7px; }
.ltable td.p10 { padding-right: 10px; }
.ltable td.p15 { padding-right: 15px; }
.ltable td.p17 { padding-right: 17px; }
.ltable td:last-child, .ltable th:last-child { width: 26px; text-align: left; padding-left: 2px; }
.ltable th { height: 24px; background: linear-gradient(#fff, #f0f0f0); }
.ltable th.lho { background: linear-gradient(#fbd99b, #f5c678); }
.y td { background: #ffff00; }
.ltable td.cur { background: #ffff99; border: 2px solid #111; border-left: 0; position: relative; overflow: visible; }
.ltable td.cur::after { content: ""; position: absolute; right: -4px; bottom: -4px; width: 5px; height: 5px; background: #666; border: 1px solid #fff; }
.lscroll { margin-top: auto; margin-bottom: 4px; height: 14px; background: #f2f2f2; font: 8px/14px "DejaVu Sans", sans-serif; text-align: right; padding-right: 9px; color: #444; }
.lt3 { margin-top: 10px; }
.lastbox { height: 47px; background: #fff; border: 1px solid #aaa; border-left: 0; flex: none; }

/* right column */
.rightcol { display: flex; flex-direction: column; min-width: 0; }
.rt { margin-top: 1px; height: 15px; width: 465px; border-left: 1px solid #8a8a8a; justify-content: flex-start; }
.rt span { font-size: 13px; line-height: 13px; margin-right: auto; padding-bottom: 2px; }
.rt .px { margin-right: 3px; }
.propwrap { flex: 1; background: #fff; border: 1px solid #a8a8a8; padding: 1px 0 0 1px; margin-top: 1px; }
.props { table-layout: fixed; border-collapse: collapse; width: 466px; }
.p1 { width: 21px; } .p2 { width: 158px; } .p3 { width: 287px; }
.props th { height: 22px; background: linear-gradient(#fff, #f2f2f2); border: 1px solid #c0c0c0; border-width: 0 1px 1px 0; font-weight: 400; font-size: 12px; line-height: 14px; padding: 0; }
.props td { height: 19px; border: 1px solid #bcbcbc; border-width: 0 1px 1px 0; padding: 0; line-height: 14px; overflow: hidden; white-space: nowrap; }
.props td.rh { text-align: center; background: linear-gradient(90deg, #fafafa, #ececec); font-size: 11px; }
.n { padding-left: 18px !important; }
.v { padding-left: 2px !important; }
.v2 { padding-left: 4px !important; }
.sub { padding-left: 29px !important; background: linear-gradient(#aaa, #aaa) 9px 0 / 1px 100% no-repeat, linear-gradient(#aaa, #aaa) 9px 9px / 16px 1px no-repeat; }
.sub.last { background: linear-gradient(#aaa, #aaa) 9px 0 / 1px 10px no-repeat, linear-gradient(#aaa, #aaa) 9px 9px / 16px 1px no-repeat; }
.tstart { background: linear-gradient(#aaa, #aaa) 9px 14px / 1px 5px no-repeat; }
.lnk { color: #0000ff; }
.gp { color: #808080; padding-left: 3px !important; }
.exp { display: inline-block; width: 11px; height: 11px; border: 1px solid #999; box-shadow: inset 0 0 0 1px #ddd; background: #fff; color: #111; font: 11px/9px "DejaVu Sans", sans-serif; text-align: center; margin-right: 5px; vertical-align: -1px; }
.selname { background: #3399ff; color: #fff; }
.selval { background: #deefff; }

/* status bar */
.status { height: 20px; flex: none; display: flex; padding-top: 3px; border-top: 1px solid #d4d4d4; gap: 3px; background: #f0f0f0; }
.st { display: block; background: #f4f4f4; line-height: 16px; border-left: 1px solid #d8d8d8; overflow: hidden; white-space: nowrap; }
.st0 { width: 14px; border-left: 0; text-align: right; }
.st1 { width: 47px; padding-left: 1px; }
.st2 { width: 1468px; padding-left: 1px; }
.st3 { flex: 1; padding-left: 0; }

/* floating IME */
.ime { position: absolute; left: 901px; top: 0; width: 185px; height: 27px; display: flex; align-items: center; }
.imelogo { width: 28px; height: 27px; flex: none; position: relative; z-index: 1; }
.imes { fill: #fff; font: bold 21px "Liberation Sans", sans-serif; }
.imebar { width: 157px; height: 23px; background: #fff; display: flex; align-items: center; justify-content: space-between; padding: 0 3px 0 6px; box-shadow: 0 0 1px #889; }
.imebar svg { width: 14px; height: 14px; flex: none; }
.imezh { color: #1a78d8; font-size: 14px; font-weight: 700; line-height: 16px; }

/* red annotation layer */
.scribble { position: absolute; left: 0; top: 0; width: 1607px; height: 1029px; pointer-events: none; }
.redbox { fill: none; stroke: #fb3636; stroke-width: 6; }
.ink { fill: none; stroke: #fb3636; stroke-width: 6; stroke-linecap: round; stroke-linejoin: round; }
.dot { fill: #fb3636; }
.hole { fill: #fff; }
.dyn12 { font: 7px "Liberation Sans", sans-serif; fill: #222; }
```
